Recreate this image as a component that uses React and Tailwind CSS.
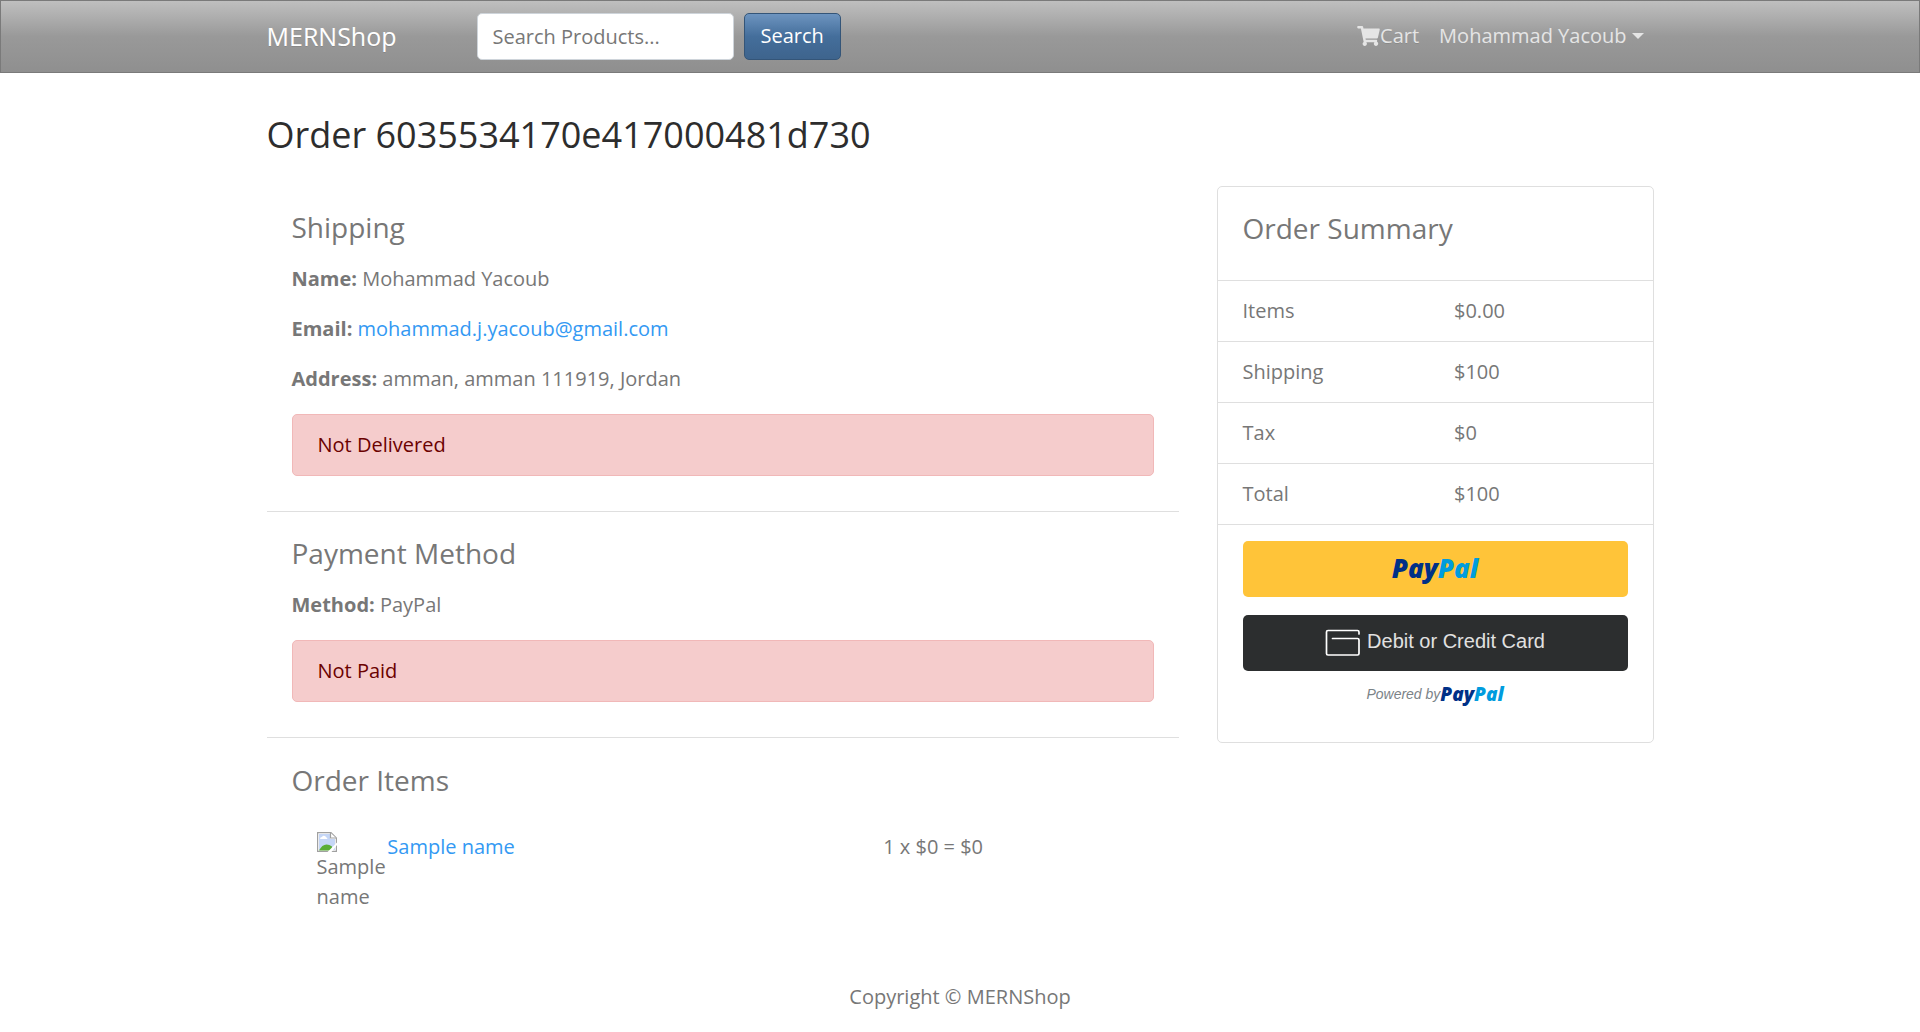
import { FaShoppingCart } from "react-icons/fa";

const summaryRows = [
  ["Items", "$0.00"],
  ["Shipping", "$100"],
  ["Tax", "$0"],
  ["Total", "$100"],
];

function SectionTitle({ children }) {
  return <h2 className="mb-[10px] py-[10px] text-[28px] leading-[33px]">{children}</h2>;
}

function Alert({ children }) {
  return (
    <div role="alert" className="mb-5 rounded-[5px] border border-[#f1b8b8] bg-[#f5cccc] px-[25px] py-[15px] text-[#6b0100]">
      {children}
    </div>
  );
}

function PayPalWordmark({ className }) {
  return (
    <span className={`font-['Open_Sans',sans-serif] font-extrabold italic ${className}`}>
      <span className="text-[#003087]">Pay</span>
      <span className="text-[#009cde]">Pal</span>
    </span>
  );
}

function CardIcon() {
  return (
    <svg width="36" height="28" viewBox="0 0 36 28" fill="none" stroke="#fff" strokeWidth="1.7" strokeLinecap="round" aria-hidden="true">
      <path d="M34 5V3Q34 1.500 32.500 1.500H3Q1.500 1.500 1.500 3V24.500Q1.500 26 3 26H32.500Q34 26 34 24.500V11Q34 9.500 32.500 9.500H7.500" />
    </svg>
  );
}

function BrokenImageIcon() {
  return (
    <svg width="20" height="20" viewBox="0 0 20 20" className="block" aria-hidden="true">
      <path d="M.6.6H14L19.400 6V19.400H.6Z" fill="#fff" stroke="#a0a0a0" strokeWidth="1.200" />
      <path d="M2 2H13V7H18V18H2Z" fill="#c5d6f6" />
      <path d="M3 7Q3 5 5 5Q6 3 8 4Q9 5 10 6Q11 7 10 7Z" fill="#fff" />
      <path d="M2 18.500Q5 12.500 9.500 12.500Q12.500 12.500 15 14.500V18.500Z" fill="#5aad35" />
      <path d="M13.500 1V6H19" fill="#fff" stroke="#a0a0a0" strokeWidth="1.200" />
      <path d="M10.500 20L20 10.500V13L14.500 20Z" fill="#fff" />
    </svg>
  );
}

export default function App() {
  return (
    <div className="flex min-h-screen flex-col bg-white font-['Open_Sans',sans-serif] text-[20px] leading-[30px] text-[#777]">
      <header className="border border-[#7a7a7a] bg-[linear-gradient(#bfbfbf,#999_50%,#8f8f8f)] [text-shadow:0_1px_0_rgba(0,0,0,0.1)]">
        <nav className="mx-auto flex max-w-[1425px] items-center px-[19px] py-3">
          <a href="#home" className="mr-20 pb-[2px] text-[25px] text-white">MERNShop</a>
          <form className="flex gap-[10px]" onSubmit={(e) => e.preventDefault()}>
            <input
              type="search"
              aria-label="Search products"
              placeholder="Search Products..."
              className="h-[47px] w-[257px] rounded-[5px] border border-[#ced4da] bg-white px-[15px] text-[#777] placeholder:text-[#777]"
            />
            <button
              type="submit"
              className="h-[47px] rounded-[5px] border border-[#345578] bg-[linear-gradient(#6d94bf,#446e9b_50%,#3e648d)] px-4 pb-[2px] text-white"
            >
              Search
            </button>
          </form>
          <div className="ml-auto flex pb-[2px] text-[#e5e5e5]">
            <a href="#cart" className="flex items-center px-[10px]">
              <FaShoppingCart className="h-5 w-[23px]" />
              Cart
            </a>
            <button type="button" className="flex items-center gap-[5px] px-[10px]">
              Mohammad Yacoub
              <span className="border-x-[6px] border-t-[6px] border-x-transparent border-t-[#e5e5e5]" />
            </button>
          </div>
        </nav>
      </header>

      <main className="mx-auto w-full max-w-[1425px] flex-1 px-[19px] py-5">
        <h1 className="mb-[10px] py-5 text-[36px] leading-[43px] text-[#2d2d2d]">Order 6035534170e417000481d730</h1>

        <div className="grid grid-cols-12 items-start gap-x-[38px]">
          <div className="col-span-8">
            <section className="border-b border-[#dfdfdf] px-[25px] py-[15px]">
              <SectionTitle>Shipping</SectionTitle>
              <p className="mb-5"><strong>Name: </strong>Mohammad Yacoub</p>
              <p className="mb-5">
                <strong>Email: </strong>
                <a href="mailto:mohammad.j.yacoub@gmail.com" className="text-[#3399f3]">mohammad.j.yacoub@gmail.com</a>
              </p>
              <p className="mb-5"><strong>Address: </strong>amman, amman 111919, Jordan</p>
              <Alert>Not Delivered</Alert>
            </section>

            <section className="border-b border-[#dfdfdf] px-[25px] py-[15px]">
              <SectionTitle>Payment Method</SectionTitle>
              <p className="mb-5"><strong>Method: </strong>PayPal</p>
              <Alert>Not Paid</Alert>
            </section>

            <section className="px-[25px] pt-4 pb-[14px]">
              <SectionTitle>Order Items</SectionTitle>
              <div className="grid grid-cols-12 gap-x-[38px] px-[25px] pt-[15px] pb-[14px]">
                <div className="min-w-0">
                  <BrokenImageIcon />
                  <span className="block">Sample name</span>
                </div>
                <div className="col-span-7">
                  <a href="#product" className="text-[#3399f3]">Sample name</a>
                </div>
                <div className="col-span-4">1 x $0 = $0</div>
              </div>
            </section>
          </div>

          <aside className="col-span-4 rounded-[5px] border border-[#dfdfdf]">
            <div className="px-[25px] py-[15px]">
              <SectionTitle>Order Summary</SectionTitle>
            </div>
            <dl>
              {summaryRows.map(([label, value]) => (
                <div key={label} className="grid grid-cols-2 gap-x-[38px] border-t border-[#dfdfdf] px-[25px] py-[15px]">
                  <dt>{label}</dt>
                  <dd>{value}</dd>
                </div>
              ))}
            </dl>
            <div className="border-t border-[#dfdfdf] px-[25px] pt-4 pb-[33px] font-['Liberation_Sans',sans-serif]">
              <button type="button" aria-label="PayPal" className="flex h-14 w-full items-center justify-center rounded-[5px] bg-[#ffc439] pb-[2px]">
                <PayPalWordmark className="text-[26px]" />
              </button>
              <button type="button" className="mt-[18px] flex h-14 w-full items-center justify-center gap-[6px] rounded-[5px] bg-[#2c2e2f] text-[#e1e1e1]">
                <CardIcon />
                <span className="pb-1">Debit or Credit Card</span>
              </button>
              <p className="mt-2 flex items-center justify-center text-[14px] text-[#7b8388]">
                <span className="italic">Powered by</span>
                <PayPalWordmark className="text-[19px]" />
              </p>
            </div>
          </aside>
        </div>
      </main>

      <footer className="py-5 text-center">Copyright © MERNShop</footer>
    </div>
  );
}
